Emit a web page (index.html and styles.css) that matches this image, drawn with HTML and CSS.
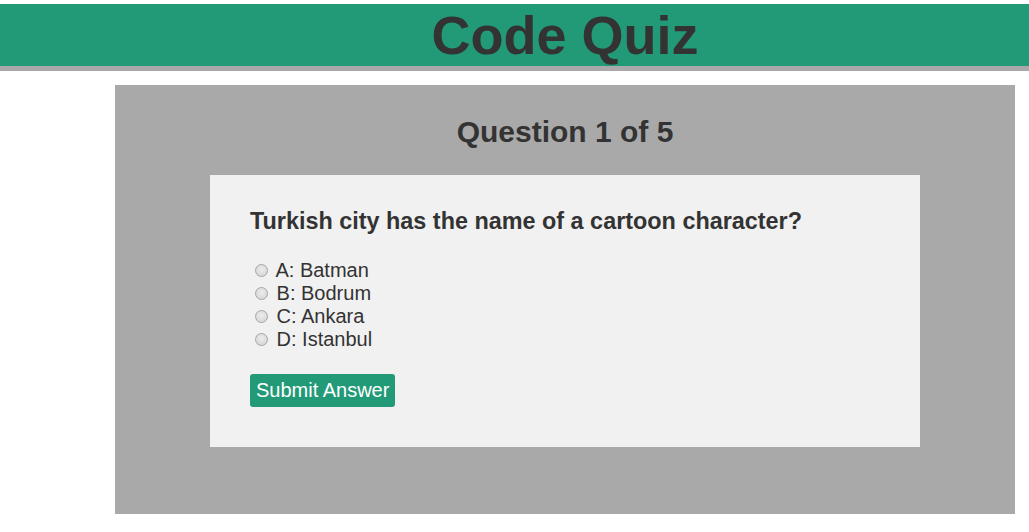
FILE: index.html
```html
<!DOCTYPE html>
<html lang="en">
<head>
<meta charset="utf-8">
<title>Code Quiz</title>
<link rel="stylesheet" href="styles.css">
</head>
<body>
<header class="site-header">
  <h1 class="site-title">Code Quiz</h1>
</header>
<main class="quiz">
  <h2 class="quiz-progress">Question 1 of 5</h2>
  <section class="quiz-card">
    <h3 class="quiz-question">Turkish city has the name of a cartoon character?</h3>
    <form class="quiz-form">
      <div class="quiz-options">
        <label class="quiz-option"><input type="radio" name="answer" value="A"> A: Batman</label>
        <label class="quiz-option"><input type="radio" name="answer" value="B"> B: Bodrum</label>
        <label class="quiz-option"><input type="radio" name="answer" value="C"> C: Ankara</label>
        <label class="quiz-option"><input type="radio" name="answer" value="D"> D: Istanbul</label>
      </div>
      <button type="button" class="quiz-submit">Submit Answer</button>
    </form>
  </section>
</main>
</body>
</html>
```

FILE: styles.css
```css
html, body {
  background: #ffffff;
}
body {
  margin: 0;
  padding-top: 4px;
  font-family: "Liberation Sans", Arial, sans-serif;
  color: #333333;
}
.site-header {
  background: #229a78;
  border-bottom: 5px solid #a9a9a9;
  padding-left: 101px;
  text-align: center;
}
.site-title {
  margin: 0;
  font-size: 54px;
  font-weight: bold;
  line-height: normal;
  color: #333333;
}
.quiz {
  width: 900px;
  margin: 14px 0 0 115px;
  box-sizing: border-box;
  padding: 30px 95px 67px;
  background: #a9a9a9;
}
.quiz-progress {
  margin: 0 0 26px;
  font-size: 30px;
  font-weight: bold;
  line-height: normal;
  text-align: center;
  color: #333333;
}
.quiz-card {
  background: #f1f1f1;
  padding: 33px 40px 40px;
}
.quiz-question {
  margin: 0 0 24px;
  font-size: 23.4px;
  font-weight: bold;
  line-height: 27px;
  color: #333333;
}
.quiz-form {
  display: flex;
  flex-direction: column;
  align-items: flex-start;
  margin: 0;
}
.quiz-options {
  display: flex;
  flex-direction: column;
}
.quiz-option {
  font-size: 20px;
  line-height: 23px;
  color: #333333;
}
.quiz-option input {
  appearance: none;
  -webkit-appearance: none;
  width: 13px;
  height: 13px;
  margin: 3px 3px 0 5px;
  box-sizing: border-box;
  border: 1px solid #a6a6a6;
  border-radius: 50%;
  background: radial-gradient(circle at 50% 40%, #ececec 0%, #dcdcdc 60%, #cfcfcf 100%);
}
.quiz-submit {
  margin-top: 23px;
  padding: 5px 6px;
  border: none;
  border-radius: 3px;
  background: #229a78;
  color: #ffffff;
  font-family: "Liberation Sans", Arial, sans-serif;
  font-size: 20px;
  line-height: 23px;
  cursor: pointer;
}
```
